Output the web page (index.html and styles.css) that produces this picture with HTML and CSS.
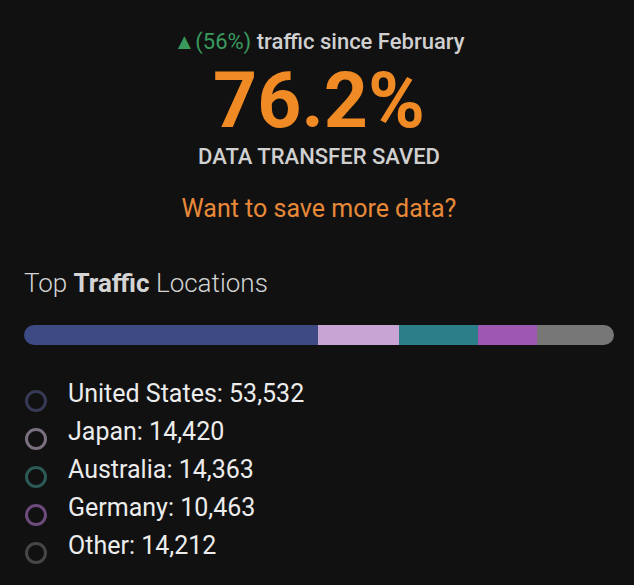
FILE: index.html
```html
<!DOCTYPE html>
<html lang="en">
    <head>
        <meta charset="UTF-8">
        <title>Traffic</title>
        <link rel="stylesheet" href="styles.css">
    </head>
    <body>
        <div class="panel">
            <div class="summary">
                <div class="trend"><span class="up">▲(56%)</span> traffic since February</div>
                <div class="big">76.2%</div>
                <div class="label">DATA TRANSFER SAVED</div>
                <a class="more" href="javascript:void(0);">Want to save more data?</a>
            </div>

            <h2 class="title">Top <b>Traffic</b> Locations</h2>

            <div class="bar">
                <div class="seg us" style="width: 49.8%"></div>
                <div class="seg jp" style="width: 13.7%"></div>
                <div class="seg au" style="width: 13.4%"></div>
                <div class="seg de" style="width: 10%"></div>
                <div class="seg other" style="flex: 1"></div>
            </div>

            <ul class="legend">
                <li><i class="dot us"></i>United States: 53,532</li>
                <li><i class="dot jp"></i>Japan: 14,420</li>
                <li><i class="dot au"></i>Australia: 14,363</li>
                <li><i class="dot de"></i>Germany: 10,463</li>
                <li><i class="dot other"></i>Other: 14,212</li>
            </ul>
        </div>
    </body>
</html>
```

FILE: styles.css
```css
*{
    margin: 0;
    padding: 0;
}
ul{
    list-style: none;
}
a{
    text-decoration: none;
}
html,body{
    width: 100%;
    height: 100%;
    background: #111111;
}
body{
    font-family: Roboto, "Liberation Sans", sans-serif;
    color: #e6e6e6;
}
.panel{
    padding: 28px 20px 0 24px;
}
.summary{
    display: flex;
    flex-direction: column;
    align-items: center;
    text-align: center;
}
.trend{
    font-size: 22px;
    font-weight: 500;
    color: #d0d0d0;
    line-height: 28px;
}
.trend .up{
    color: #3a9a5e;
    font-weight: 400;
}
.big{
    font-size: 77px;
    font-weight: 700;
    color: #f08a24;
    line-height: 84px;
    margin-top: 3px;
}
.label{
    font-size: 22px;
    font-weight: 500;
    color: #d0d0d0;
    line-height: 26px;
    margin-top: 1px;
}
.more{
    margin-top: 24px;
    font-size: 25px;
    color: #e8893a;
    line-height: 30px;
}
.title{
    margin-top: 43px;
    font-size: 26px;
    font-weight: 300;
    color: #d4d4d4;
    line-height: 32px;
}
.title b{
    font-weight: 700;
}
.bar{
    display: flex;
    margin-top: 26px;
    height: 20px;
    border-radius: 10px;
    overflow: hidden;
}
.seg.us{ background: #3e4a84; }
.seg.jp{ background: #c8a4d2; }
.seg.au{ background: #2b7f88; }
.seg.de{ background: #9c58b3; }
.seg.other{ background: #777777; }
.legend{
    margin-top: 30px;
}
.legend li{
    display: flex;
    align-items: flex-start;
    font-size: 25px;
    line-height: 38px;
    color: #ececec;
}
.dot{
    flex: none;
    width: 16px;
    height: 16px;
    border: 3px solid;
    border-radius: 50%;
    margin: 15px 21px 0 1px;
}
.dot.us{ border-color: #363a54; }
.dot.jp{ border-color: #7b707f; }
.dot.au{ border-color: #2c5a56; }
.dot.de{ border-color: #6f4b7d; }
.dot.other{ border-color: #474747; }
```
